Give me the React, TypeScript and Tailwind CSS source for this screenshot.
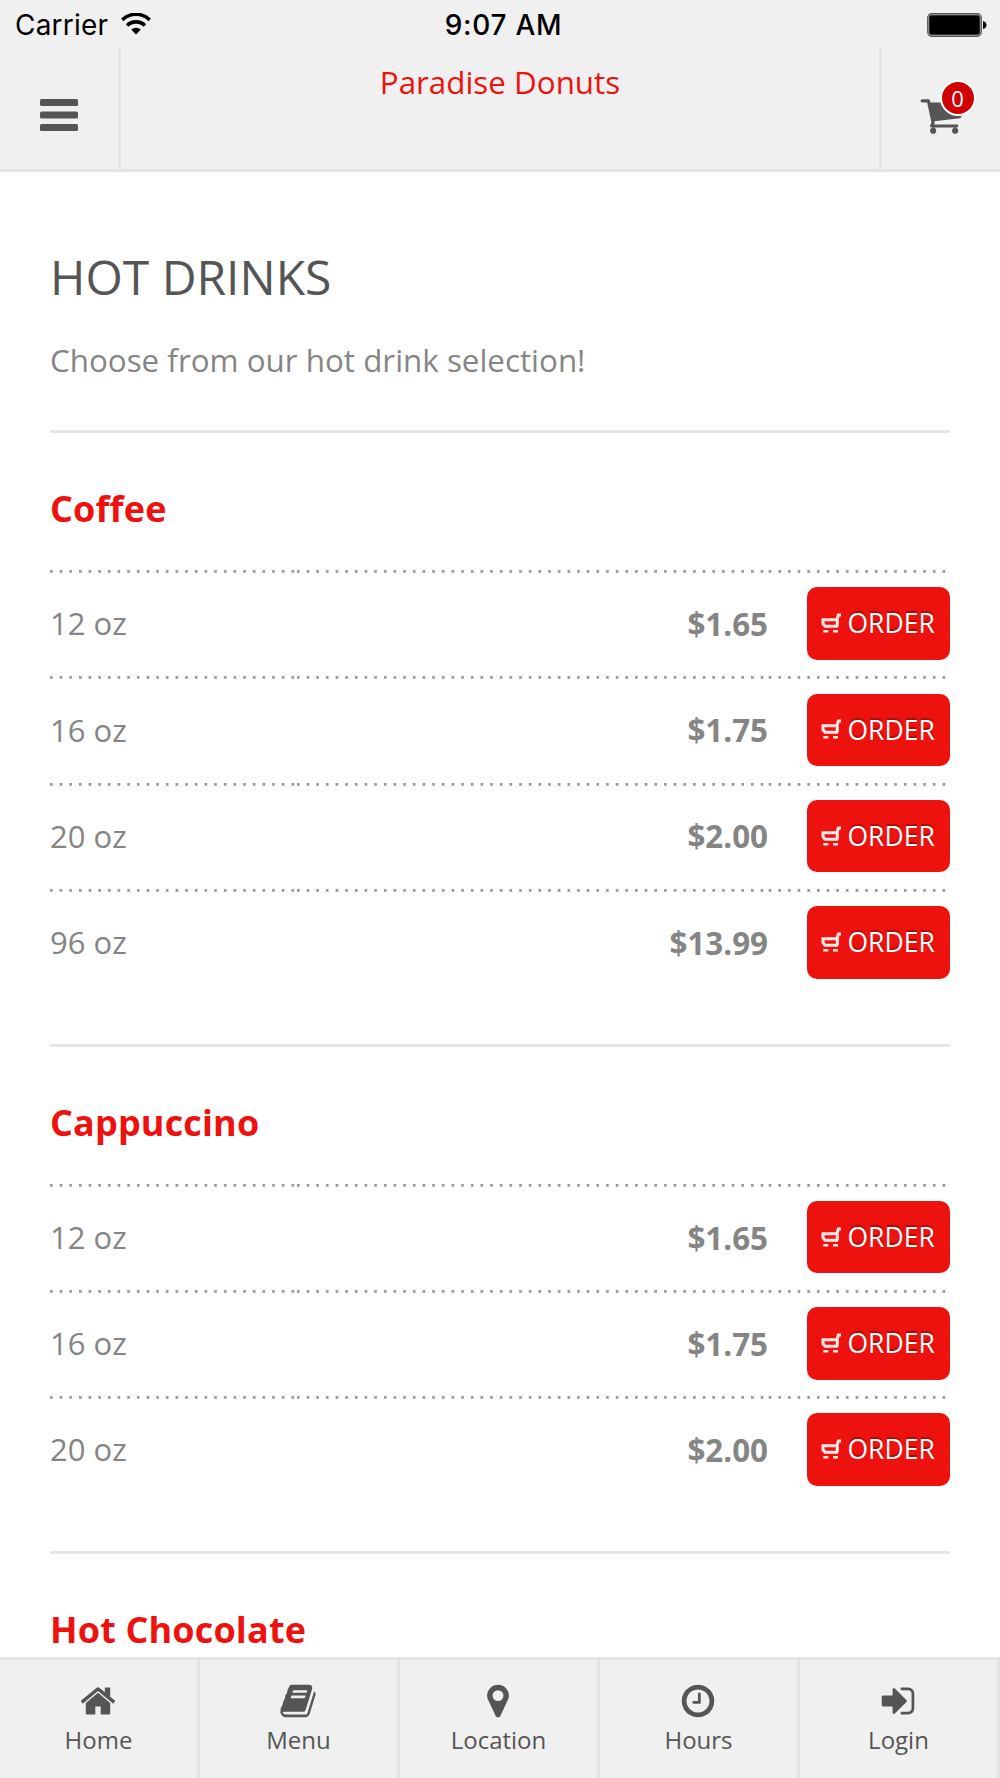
import React from 'react';

interface Size {
  label: string;
  price: string;
}

interface Section {
  name: string;
  sizes: Size[];
}

const sections: Section[] = [
  {
    name: 'Coffee',
    sizes: [
      { label: '12 oz', price: '$1.65' },
      { label: '16 oz', price: '$1.75' },
      { label: '20 oz', price: '$2.00' },
      { label: '96 oz', price: '$13.99' }
    ]
  },
  {
    name: 'Cappuccino',
    sizes: [
      { label: '12 oz', price: '$1.65' },
      { label: '16 oz', price: '$1.75' },
      { label: '20 oz', price: '$2.00' }
    ]
  },
  { name: 'Hot Chocolate', sizes: [] }
];

const icons = {
  home: 'M1472 992v480q0 26-19 45t-45 19h-384v-384h-256v384h-384q-26 0-45-19t-19-45v-480q0-1 .5-3t.5-3l575-474 575 474q1 2 1 6zm223-69l-62 74q-8 9-21 11h-3q-13 0-21-7l-692-577-692 577q-12 8-24 7-13-2-21-11l-62-74q-8-10-7-23.5t11-21.5l719-599q32-26 76-26t76 26l244 204v-195q0-14 9-23t23-9h192q14 0 23 9t9 23v408l219 182q10 8 11 21.5t-7 23.5z',
  book: 'M1703 478q40 57 18 129l-275 906q-19 64-76.5 107.5t-122.5 43.5h-923q-77 0-148.5-53.5t-99.5-131.5q-24-67-2-127 0-4 3-27t4-37q1-8-3-21.5t-3-19.5q2-11 8-21t16.5-23.5 16.5-23.5q23-38 45-91.5t30-91.5q3-10 .5-30t-.5-28q3-11 17-28t17-23q21-36 42-92t25-90q1-9-2.5-32t.5-28q4-13 22-30.5t22-22.5q19-26 42.5-84.5t27.5-96.5q1-8-3-25.5t-2-26.5q2-8 9-18t18-23 17-21q8-12 16.5-30.5t15-35 16-36 19.5-32 26.5-23.5 36-11.5 47.5 5.5l-1 3q38-9 51-9h761q74 0 114 56t18 130l-274 906q-36 119-71.5 153.5t-128.5 34.5h-869q-27 0-38 15-11 16-1 43 24 70 144 70h923q29 0 56-15.5t35-41.5l300-987q7-22 5-57 38 15 59 43zm-1064 2q-4 13 2 22.5t20 9.5h608q13 0 25.5-9.5t16.5-22.5l21-64q4-13-2-22.5t-20-9.5h-608q-13 0-25.5 9.5t-16.5 22.5zm-83 256q-4 13 2 22.5t20 9.5h608q13 0 25.5-9.5t16.5-22.5l21-64q4-13-2-22.5t-20-9.5h-608q-13 0-25.5 9.5t-16.5 22.5z',
  marker: 'M1152 640q0-106-75-181t-181-75-181 75-75 181 75 181 181 75 181-75 75-181zm256 0q0 109-33 179l-364 774q-16 33-47.5 52t-67.5 19-67.5-19-46.5-52l-365-774q-33-70-33-179 0-212 150-362t362-150 362 150 150 362z',
  clock: 'M1024 544v448q0 14-9 23t-23 9h-320q-14 0-23-9t-9-23v-64q0-14 9-23t23-9h224v-352q0-14 9-23t23-9h64q14 0 23 9t9 23zm416 352q0-148-73-273t-198-198-273-73-273 73-198 198-73 273 73 273 198 198 273 73 273-73 198-198 73-273zm224 0q0 209-103 385.5t-279.5 279.5-385.5 103-385.5-103-279.5-279.5-103-385.5 103-385.5 279.5-279.5 385.5-103 385.5 103 279.5 279.5 103 385.5z',
  signIn: 'M1312 896q0 26-19 45l-544 544q-19 19-45 19t-45-19-19-45v-288h-448q-26 0-45-19t-19-45v-384q0-26 19-45t45-19h448v-288q0-26 19-45t45-19 45 19l544 544q19 19 19 45zm352-352v704q0 119-84.5 203.5t-203.5 84.5h-320q-13 0-22.5-9.5t-9.5-22.5q0-4-1-20t-.5-26.5 3-23.5 10-19.5 20.5-6.5h320q66 0 113-47t47-113v-704q0-66-47-113t-113-47h-312l-11.5-1-11.5-3-8-5.5-7-9-2-13.5q0-4-1-20t-.5-26.5 3-23.5 10-19.5 20.5-6.5h320q119 0 203.5 84.5t84.5 203.5z',
  cart: 'M704 1536q0 52-38 90t-90 38-90-38-38-90 38-90 90-38 90 38 38 90zm896 0q0 52-38 90t-90 38-90-38-38-90 38-90 90-38 90 38 38 90zm128-1088v512q0 24-16.5 42.5t-40.5 21.5l-1044 122q13 60 13 70 0 16-24 64h920q26 0 45 19t19 45-19 45-45 19h-1024q-26 0-45-19t-19-45q0-11 8-31.5t16-36 21.5-40 15.5-29.5l-177-823h-204q-26 0-45-19t-19-45 19-45 45-19h256q16 0 28.5 6.5t19.5 15.5 13 24.5 8 26 5.5 29.5 4.5 26h1201q26 0 45 19t19 45z'
};

const tabs = [
  { label: 'Home', icon: icons.home },
  { label: 'Menu', icon: icons.book },
  { label: 'Location', icon: icons.marker },
  { label: 'Hours', icon: icons.clock },
  { label: 'Login', icon: icons.signIn }
];

const dotRuns = [
  { start: 0, count: 26 },
  { start: 247, count: 49 },
  { start: 718.7, count: 19 }
];

const Icon = ({ path, className }: { path: string; className: string }) => (
  <svg viewBox="0 0 1792 1792" fill="currentColor" className={className}>
    <path d={path} />
  </svg>
);

const StatusBar = () => (
  <div className="h-12 pl-[15px] pr-[13px] grid grid-cols-3 items-center font-['Inter','Liberation_Sans',sans-serif] text-black">
    <div className="flex items-center gap-[13px] pt-0.5">
      <span className="text-[28px] leading-none tracking-[0.2px]">Carrier</span>
      <svg viewBox="0 0 30 22" className="w-[30px] h-[22px] -mt-[3px]">
        <path d="M1.3 6.9a19.5 19.5 0 0 1 27.4 0" fill="none" stroke="#000" strokeWidth="3.6" />
        <path d="M6.1 12.5a12.7 12.7 0 0 1 17.8 0" fill="none" stroke="#000" strokeWidth="3.6" />
        <path d="M15 21.5l-4.8-4.9a7 7 0 0 1 9.6 0z" />
      </svg>
    </div>
    <div className="text-center text-[28px] font-medium leading-none pt-0.5 pl-[5px] tracking-[0.7px]">9:07 AM</div>
    <svg viewBox="0 0 60 24" className="w-[60px] h-6 mt-px justify-self-end">
      <rect x="0.8" y="0.8" width="53.4" height="22.4" rx="4" fill="#ccc" stroke="#555" strokeWidth="1.4" />
      <rect x="2.2" y="2.2" width="50.6" height="19.6" rx="2" />
      <path d="M56 8q3.5 1 3.5 4t-3.5 4z" />
    </svg>
  </div>
);

const Header = () => (
  <header className="h-[172px] shrink-0 flex flex-col bg-[#f0f0f0] border-b-[3px] border-[#e4e4e4]">
    <StatusBar />
    <div className="flex-1 flex">
      <button className="w-[121px] border-r-[3px] border-[#e4e4e4] flex items-center pl-10 pt-2.5">
        <svg viewBox="0 0 38 32" fill="#555" className="w-[38px] h-8 mt-0.5">
          <rect width="38" height="7" rx="1.5" />
          <rect y="12.5" width="38" height="7" rx="1.5" />
          <rect y="25" width="38" height="7" rx="1.5" />
        </svg>
      </button>
      <div className="flex-1 text-center text-[31.35px] leading-[44px] pt-3 text-[#ee120e]">Paradise Donuts</div>
      <button className="relative w-[121px] border-l-[3px] border-[#e4e4e4] flex items-start pl-[37px] pt-[45px]">
        <Icon path={icons.cart} className="w-11 h-11 text-[#555]" />
        <span className="absolute left-[57.5px] top-[32px] w-[36px] h-[36px] rounded-full border-2 border-white bg-[#d00000] text-white text-[22px] leading-[33px] text-center">0</span>
      </button>
    </div>
  </header>
);

const DottedLine = () => (
  <svg className="block w-full h-[3px]" fill="#999">
    {dotRuns.map(run =>
      Array.from({ length: run.count }).map((_, i) => (
        <rect key={`${run.start}-${i}`} x={run.start + i * 9.66} width="2.6" height="2.8" />
      ))
    )}
  </svg>
);

const OrderButton = () => (
  <button className="w-[143px] h-[72.5px] rounded-[10px] bg-[#ee120e] text-white flex items-center pl-3.5">
    <svg viewBox="0 0 20 20" className="w-5 h-5 -mt-px" fill="none" stroke="#fff" strokeOpacity="0.9" strokeWidth="3">
      <path d="M16.3 13.5V5.5l1-3.500h2.700M17 6.800h-15v4l2 2.500h13" />
      <path d="M2.300 18.300h5M12 18.300h5" strokeWidth="2.5" />
    </svg>
    <span className="ml-[6.5px] text-[26.5px] leading-none [text-shadow:0_-2px_1px_rgba(0,0,0,0.3)]">ORDER</span>
  </button>
);

const MenuSection = ({ section }: { section: Section }) => (
  <section className="border-t-[3px] border-[#e6e6e6] pb-[48.6px]">
    <h2 className="text-[36px] font-bold leading-[50px] pt-[51px] pb-[36px] tracking-[0.15px] text-[#ee120e]">{section.name}</h2>
    {section.sizes.map(size => (
      <div key={size.label} className="h-[106.25px]">
        <DottedLine />
        <div className="h-[101px] flex items-center">
          <span className="flex-1 text-[31px]">{size.label}</span>
          <span className="text-[31.35px] font-bold mr-[39px]">{size.price}</span>
          <OrderButton />
        </div>
      </div>
    ))}
  </section>
);

const TabBar = () => (
  <nav className="h-[121px] shrink-0 flex bg-[#f0f0f0] border-t-[3px] border-[#e4e4e4] text-[#555]">
    {tabs.map(tab => (
      <button key={tab.label} className="flex-1 border-r-[3px] border-[#e4e4e4] flex flex-col items-center pt-[22px]">
        <Icon path={tab.icon} className="w-[38px] h-[38px] mr-px" />
        <span className="text-[24px] leading-8 mt-[4px]">{tab.label}</span>
      </button>
    ))}
  </nav>
);

const App = () => {
  return (
    <div className="h-[1778px] w-full flex flex-col overflow-hidden bg-white font-['Open_Sans','Noto_Sans',sans-serif] text-[#858585]">
      <Header />
      <main className="flex-1 min-h-0 overflow-hidden px-[50px]">
        <h1 className="text-[48px] leading-[60px] pt-[75px] text-[#555]">HOT DRINKS</h1>
        <p className="text-[31.35px] leading-[44px] pt-[31px] pb-12">Choose from our hot drink selection!</p>
        {sections.map(section => (
          <MenuSection key={section.name} section={section} />
        ))}
      </main>
      <TabBar />
    </div>
  );
};

export default App;
